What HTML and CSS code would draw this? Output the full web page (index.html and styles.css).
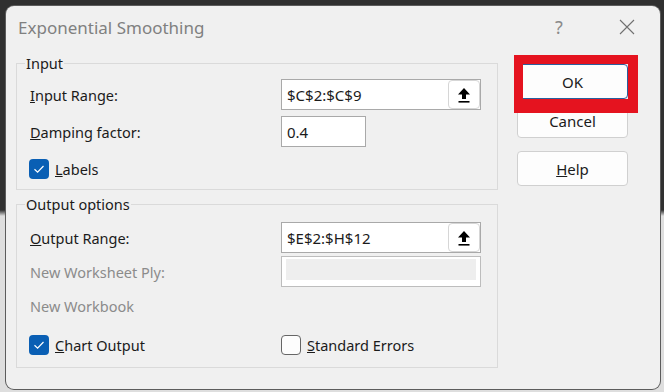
FILE: index.html
```html
<!DOCTYPE html>
<html lang="en">
<head>
  <meta charset="UTF-8" />
  <title>Exponential Smoothing</title>
  <link rel="stylesheet" href="styles.css">
</head>
<body>

  <div class="dialog">
    <div class="titlebar">
      <span class="title">Exponential Smoothing</span>
      <span class="caption-btn help-q">?</span>
      <span class="caption-btn close-x">
        <svg width="16" height="16" viewBox="0 0 16 16"><path d="M1 1 L15 15 M15 1 L1 15" stroke="#707070" stroke-width="1.1" fill="none"/></svg>
      </span>
    </div>

    <div class="content">
      <div class="groups">
        <fieldset class="group group-input">
          <legend>Input</legend>
          <div class="row first">
            <span class="lbl"><u>I</u>nput Range:</span>
            <div class="field">
              <span>$C$2:$C$9</span>
              <span class="ref-btn">
                <svg width="14" height="16" viewBox="0 0 14 16"><path d="M7 1 L13 7.5 L9 7.5 L9 12 L5 12 L5 7.5 L1 7.5 Z" fill="#000"/><rect x="1.5" y="14" width="11" height="1.6" fill="#000"/></svg>
              </span>
            </div>
          </div>
          <div class="row second">
            <span class="lbl"><u>D</u>amping factor:</span>
            <div class="field short">0.4</div>
          </div>
          <div class="checks checks-input">
            <span class="check">
              <span class="box on"><svg width="20" height="20" viewBox="0 0 20 20"><path d="M5.5 10.2 L8.6 13.2 L14.5 7" stroke="#fff" stroke-width="1.2" fill="none"/></svg></span>
              <span><u>L</u>abels</span>
            </span>
          </div>
        </fieldset>

        <fieldset class="group group-output">
          <legend>Output options</legend>
          <div class="row first">
            <span class="lbl"><u>O</u>utput Range:</span>
            <div class="field">
              <span>$E$2:$H$12</span>
              <span class="ref-btn">
                <svg width="14" height="16" viewBox="0 0 14 16"><path d="M7 1 L13 7.5 L9 7.5 L9 12 L5 12 L5 7.5 L1 7.5 Z" fill="#000"/><rect x="1.5" y="14" width="11" height="1.6" fill="#000"/></svg>
              </span>
            </div>
          </div>
          <div class="row second">
            <span class="lbl disabled">New Worksheet Ply:</span>
            <div class="field ply"><div class="ply-inner"></div></div>
          </div>
          <div class="row-text">
            <span class="lbl disabled">New Workbook</span>
          </div>
          <div class="checks checks-output">
            <span class="check">
              <span class="box on"><svg width="20" height="20" viewBox="0 0 20 20"><path d="M5.5 10.2 L8.6 13.2 L14.5 7" stroke="#fff" stroke-width="1.2" fill="none"/></svg></span>
              <span><u>C</u>hart Output</span>
            </span>
            <span class="check">
              <span class="box off"></span>
              <span><u>S</u>tandard Errors</span>
            </span>
          </div>
        </fieldset>
      </div>

      <div class="actions">
        <button class="btn btn-default">OK</button>
        <button class="btn btn-cancel">Cancel</button>
        <button class="btn btn-help"><u>H</u>elp</button>
        <div class="highlight"></div>
      </div>
    </div>
  </div>

</body>
</html>
```

FILE: styles.css
```css
body {
  margin: 0;
  width: 664px;
  height: 392px;
  box-sizing: border-box;
  padding: 6px 0 0 6px;
  overflow: hidden;
  background: linear-gradient(#303030 0, #303030 210px, #dedede 216px);
  font-family: "Noto Sans", "Open Sans", sans-serif;
  font-size: 14.5px;
  color: #1b1b1b;
}

.dialog {
  width: 654px;
  height: 383px;
  background-color: #f0f0f0;
  border-radius: 8px;
  box-shadow: 0 0 0 1px #5c5c5c;
}

.titlebar {
  display: flex;
  align-items: center;
  height: 42px;
  padding-left: 12px;
}

.title {
  flex: 1;
  font-size: 17px;
  color: #808080;
}

.caption-btn {
  width: 46px;
  height: 32px;
  display: flex;
  align-items: center;
  justify-content: center;
}

.help-q {
  font-size: 18px;
  color: #8a8a8a;
  margin-right: 22px;
}

.close-x {
  margin-right: 10px;
}

.content {
  display: flex;
  gap: 19px;
  padding: 5px 0 0 10px;
}

.groups {
  width: 482px;
}

.group {
  margin: 0;
  padding: 0 0 0 12px;
  border: 1px solid #dadada;
  width: 482px;
  box-sizing: border-box;
}

.group legend {
  margin-left: -4px;
  padding: 0 1px;
  line-height: 20px;
}

.group-output {
  margin-top: 4px;
}

.row {
  display: grid;
  grid-template-columns: 252px 200px;
  align-items: center;
  height: 31px;
}

.group-input .first { margin-top: 6px; }
.group-input .second { margin-top: 6px; }
.group-output .first { margin-top: 8px; }
.group-output .second { margin-top: 3px; }

.lbl {
  padding-left: 1px;
}

.lbl.disabled {
  color: #8b8b8b;
}

.field {
  height: 31px;
  box-sizing: border-box;
  border: 1px solid #a9a9a9;
  background-color: #fff;
  display: flex;
  align-items: center;
  padding-left: 5px;
  font-size: 15px;
}

.field.short {
  width: 85px;
}

.field.ply {
  border-color: #bdbdbd;
  align-items: flex-start;
  padding: 2px 4px 0 4px;
}

.ply-inner {
  width: 100%;
  height: 21px;
  background-color: #eeeeee;
}

.ref-btn {
  margin-left: auto;
  width: 32px;
  height: 29px;
  box-sizing: border-box;
  border: 1px solid #d6d6d6;
  border-radius: 4px;
  background-color: #fff;
  display: flex;
  align-items: center;
  justify-content: center;
}

.row-text {
  height: 20px;
  display: flex;
  align-items: center;
  margin-top: 9px;
}

.checks {
  display: grid;
  grid-template-columns: 252px auto;
  height: 20px;
}

.checks-input {
  margin-top: 12px;
  margin-bottom: 10px;
}

.checks-output {
  margin-top: 19px;
  margin-bottom: 12px;
}

.check {
  display: flex;
  align-items: center;
  gap: 6px;
}

.box {
  width: 20px;
  height: 20px;
  box-sizing: border-box;
  border-radius: 4px;
  display: block;
}

.box svg {
  display: block;
}

.box.on {
  background-color: #0a5fb4;
}

.box.off {
  border: 1px solid #666;
  background-color: #fdfdfd;
}

.actions {
  position: relative;
  width: 111px;
  margin-top: 11px;
  display: flex;
  flex-direction: column;
}

.btn {
  height: 35px;
  padding: 0;
  border: 1px solid #d0d0d0;
  border-radius: 4px;
  background-color: #fdfdfd;
  font-family: inherit;
  font-size: 15px;
  color: #1b1b1b;
}

.btn-default {
  border-color: #2a5f9e;
}

.btn-cancel {
  margin-top: 4px;
}

.btn-help {
  margin-top: 13px;
}

.highlight {
  position: absolute;
  left: -3px;
  top: -9px;
  width: 124px;
  height: 58px;
  box-sizing: border-box;
  border: solid #e5131f;
  border-width: 9px 10px 14px 9px;
}
```
